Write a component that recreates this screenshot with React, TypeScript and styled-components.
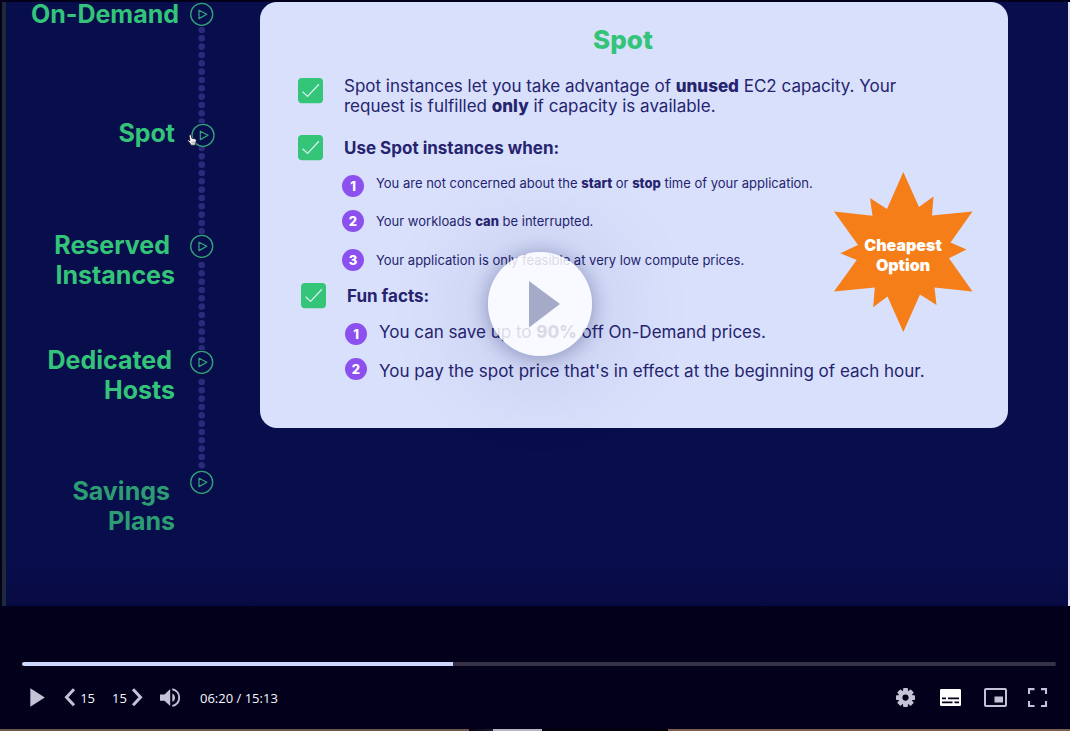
import React from 'react';
import styled, { createGlobalStyle } from 'styled-components';

const GlobalStyle = createGlobalStyle`
  * { box-sizing: border-box; }
  body { margin: 0; background: #02001b; }
  button { border: 0; padding: 0; background: none; color: inherit; font: inherit; cursor: pointer; }
  b { font-weight: 800; }
  svg { display: block; }
`;

const Player = styled.div`
  display: flex;
  flex-direction: column;
  min-height: 100vh;
  padding-top: 2px;
  background: #02001b;
  font-family: Inter, 'Liberation Sans', sans-serif;
`;

const Stage = styled.main`
  position: relative;
  flex: 1;
  display: flex;
  align-items: flex-start;
  margin-left: 2px;
  padding-right: 60px;
  overflow: hidden;
  border-left: 4px solid #1d2a39;
  border-right: 2px solid #e4e4f0;
  background: linear-gradient(to bottom, #080d4c 0, #080d4c 92%, #070a42 100%);
`;

const Nav = styled.nav`
  flex: none;
  width: 208px;
`;

const NavItem = styled.div<{ $height: number }>`
  display: flex;
  justify-content: flex-end;
  gap: 11px;
  height: ${(p) => p.$height}px;
`;

const NavLink = styled.a<{ $drop: number; $faded?: boolean }>`
  margin-top: ${(p) => p.$drop}px;
  color: ${(p) => (p.$faded ? '#2c9d72' : '#33c479')};
  font-size: 25px;
  font-weight: 700;
  line-height: 30px;
  text-align: right;
  text-decoration: none;
`;

const NavLine = styled.span<{ $inset: number }>`
  display: block;
  padding-right: ${(p) => p.$inset}px;
`;

const Track = styled.div`
  display: flex;
  flex-direction: column;
  width: 24px;
`;

const NodeIcon = styled.svg`
  flex: none;
  width: 24px;
  height: 24px;
  overflow: visible;
`;

const Connector = styled.svg`
  flex: 1;
  width: 24px;
  min-height: 0;
`;

const HandCursor = styled.svg`
  position: absolute;
  left: 181px;
  top: 132px;
  width: 10px;
  height: 12px;
`;

const Card = styled.article`
  position: relative;
  flex: 1;
  margin-left: 46px;
  padding: 22px 60px 48px 38px;
  border-radius: 17px;
  background: #d8e0fc;
  color: #26246f;
`;

const Title = styled.h1`
  margin: 0 0 20px;
  color: #33c479;
  font-size: 26px;
  font-weight: 800;
  line-height: 32px;
  text-align: center;
`;

const Section = styled.section<{ $gap: number; $indent?: number }>`
  margin-top: ${(p) => p.$gap}px;
  padding-left: ${(p) => p.$indent ?? 0}px;
`;

const Row = styled.div<{ $top?: boolean }>`
  display: flex;
  align-items: ${(p) => (p.$top ? 'flex-start' : 'center')};
  gap: 20px;
`;

const CheckIcon = styled.svg<{ $low?: boolean }>`
  flex: none;
  width: 26px;
  height: 26px;
  margin-top: ${(p) => (p.$low ? 2 : 0)}px;
`;

const Paragraph = styled.p`
  margin: 0;
  max-width: 580px;
  font-size: 17px;
  line-height: 20px;
`;

const Heading = styled.h2`
  margin: 0;
  font-size: 17px;
  font-weight: 700;
  line-height: 20px;
`;

const Steps = styled.ol`
  margin: 0;
  padding: 0 0 0 44px;
  list-style: none;
`;

const Step = styled.li<{ $gap: number; $align: string; $large?: boolean }>`
  display: flex;
  align-items: ${(p) => p.$align};
  gap: 12px;
  margin-top: ${(p) => p.$gap}px;
  font-size: ${(p) => (p.$large ? 17 : 13)}px;
  line-height: ${(p) => (p.$large ? 18 : 16)}px;
  white-space: nowrap;
`;

const StepNumber = styled.span`
  flex: none;
  width: 22px;
  height: 22px;
  border-radius: 50%;
  background: #8c50ee;
  color: #fff;
  font-size: 13px;
  font-weight: 800;
  line-height: 22px;
  text-align: center;
`;

const Burst = styled.div`
  position: absolute;
  top: 169px;
  right: 35px;
  display: grid;
  place-items: center;
  width: 140px;
  height: 162px;
`;

const BurstShape = styled.svg`
  grid-area: 1 / 1;
  width: 140px;
  height: 162px;
`;

const BurstText = styled.strong`
  grid-area: 1 / 1;
  z-index: 1;
  padding-top: 6px;
  color: #fff;
  font-size: 16px;
  font-weight: 900;
  line-height: 20px;
  text-align: center;
`;

const BigPlay = styled.button`
  position: absolute;
  top: calc(50% - 52px);
  left: calc(50% - 49px);
  width: 104px;
  height: 104px;
  border-radius: 50%;
  background: rgba(255, 255, 255, 0.83);
  box-shadow: 0 2px 20px rgba(12, 14, 80, 0.34), 0 4px 110px 4px rgba(12, 14, 80, 0.16);
`;

const Controls = styled.div`
  height: 123px;
  padding: 55px 14px 0 22px;
`;

const Seek = styled.input`
  display: block;
  width: 100%;
  height: 6px;
  margin: 0;
  appearance: none;
  background: none;
  &::-webkit-slider-runnable-track {
    height: 4px;
    border-radius: 2px;
    background: linear-gradient(to right, #cbd7fb 0, #cbd7fb 41.7%, #353247 41.7%);
  }
  &::-webkit-slider-thumb {
    appearance: none;
    width: 1px;
    height: 4px;
    background: none;
  }
`;

const Bar = styled.div`
  display: flex;
  align-items: center;
  height: 24px;
  margin-top: 19px;
  padding: 0 8px;
  color: #c4c3d6;
  font-family: 'Open Sans', 'Noto Sans', sans-serif;
  font-size: 13px;
  font-weight: 500;
`;

const Group = styled.div<{ $gap: number }>`
  display: flex;
  align-items: center;
  gap: ${(p) => p.$gap}px;
`;

const Control = styled.button<{ $width: number; $on?: boolean }>`
  display: flex;
  align-items: center;
  justify-content: space-between;
  width: ${(p) => p.$width}px;
  height: 24px;
  color: ${(p) => (p.$on ? '#ffffff' : '#c4c3d6')};
`;

const Digits = styled.span`
  color: #f8f8fc;
`;

const Time = styled.span`
  margin-left: 2px;
  color: #f8f8fc;
`;

const Spacer = styled.div`
  flex: 1;
`;

const Strip = styled.div`
  height: 2px;
  background: linear-gradient(
    to right,
    #6b5648 0, #6b5648 43.8%, #060410 43.8%, #1e1b33 46.1%, #b5b5bd 46.1%,
    #b5b5bd 50.7%, #030206 50.7%, #030206 62.4%, #7a5f50 62.4%
  );
`;

type Plan = {
  lines: { text: string; inset: number }[];
  height: number;
  drop: number;
  dots?: number;
  faded?: boolean;
  active?: boolean;
};

const plans: Plan[] = [
  { lines: [{ text: 'On-Demand', inset: 0 }], height: 121, drop: -3, dots: 4 },
  { lines: [{ text: 'Spot', inset: 4 }], height: 111, drop: -5, dots: 1, active: true },
  { lines: [{ text: 'Reserved', inset: 9 }, { text: 'Instances', inset: 4 }], height: 116, drop: -4, dots: 7 },
  { lines: [{ text: 'Dedicated', inset: 7 }, { text: 'Hosts', inset: 4 }], height: 120, drop: -5, dots: 8 },
  { lines: [{ text: 'Savings', inset: 9 }, { text: 'Plans', inset: 4 }], height: 68, drop: 6, faded: true },
];

const Check = ({ low }: { low?: boolean }) => (
  <CheckIcon $low={low} viewBox="0 0 26 26" aria-hidden="true">
    <rect x="0" y="0" width="25" height="25.3" rx="4" fill="#34c578" />
    <path d="M4.6 13.8 L9.6 18.4 L20.9 6.3" fill="none" stroke="#d3f0f0" strokeWidth="1.3" />
  </CheckIcon>
);

export default function App() {
  return (
    <Player>
      <GlobalStyle />
      <Stage>
        <Nav aria-label="Pricing options">
          {plans.map((plan) => (
            <NavItem key={plan.lines[0].text} $height={plan.height}>
              <NavLink href="#" $drop={plan.drop} $faded={plan.faded}>
                {plan.lines.map((line) => (
                  <NavLine key={line.text} $inset={line.inset}>{line.text}</NavLine>
                ))}
              </NavLink>
              <Track>
                <NodeIcon viewBox="0 0 24 24" aria-hidden="true">
                  <g transform={plan.active ? 'translate(1.3 0)' : undefined} fill="none" stroke="#33a479" strokeLinejoin="round">
                    <circle cx="11.7" cy="12.3" r="11" strokeWidth="1.3" />
                    <path d="M9 8.2 L16.8 12.3 L9 16.6 Z" strokeWidth="1.2" />
                  </g>
                </NodeIcon>
                {plan.dots !== undefined && (
                  <Connector aria-hidden="true">
                    <line x1="11.7" x2="11.7" y1={plan.dots} y2="100%" stroke="#2b2a7c" strokeWidth="6.6" strokeLinecap="round" strokeDasharray="0 8.33" />
                  </Connector>
                )}
              </Track>
            </NavItem>
          ))}
        </Nav>

        <Card>
          <Title>Spot</Title>
          <Row $top>
            <Check low />
            <Paragraph>
              Spot instances let you take advantage of <b>unused</b> EC2 capacity. Your
              request is fulfilled <b>only</b> if capacity is available.
            </Paragraph>
          </Row>
          <Section $gap={19}>
            <Row>
              <Check />
              <Heading>Use Spot instances when:</Heading>
            </Row>
            <Steps>
              <Step $gap={14} $align="flex-start">
                <StepNumber>1</StepNumber>
                <span>You are not concerned about the <b>start</b> or <b>stop</b> time of your application.</span>
              </Step>
              <Step $gap={13} $align="center">
                <StepNumber>2</StepNumber>
                <span>Your workloads <b>can</b> be interrupted.</span>
              </Step>
              <Step $gap={17} $align="center">
                <StepNumber>3</StepNumber>
                <span>Your application is only feasible at very low compute prices.</span>
              </Step>
            </Steps>
          </Section>
          <Section $gap={12} $indent={3}>
            <Row>
              <Check />
              <Heading>Fun facts:</Heading>
            </Row>
            <Steps>
              <Step $gap={14} $align="flex-start" $large>
                <StepNumber>1</StepNumber>
                <span>You can save up to <b>90%</b> off On-Demand prices.</span>
              </Step>
              <Step $gap={13} $align="flex-end" $large>
                <StepNumber>2</StepNumber>
                <span>You pay the spot price that's in effect at the beginning of each hour.</span>
              </Step>
            </Steps>
          </Section>
          <Burst>
            <BurstShape viewBox="0 0 140 162" aria-hidden="true">
              <path
                fill="#f57e18"
                d="M70.3 1 L86 36 L100.5 25.5 L99 44.5 L139.5 40.5 L117.5 71.5 L133.5 78.5 L116 87.3 L139.5 120.5 L101.5 116.5 L103.5 134 L87 123.5 L70.3 161 L54.5 125.5 L40.2 136.3 L41.8 116.5 L1 120.5 L23.7 89 L7.3 82.3 L25 74 L1 40.5 L39.5 44.7 L37 27 L54 38 Z"
              />
            </BurstShape>
            <BurstText>Cheapest<br />Option</BurstText>
          </Burst>
        </Card>

        <HandCursor viewBox="0 0 11 13" aria-hidden="true">
          <path
            d="M3.2 0.8 C4 0.5 4.6 1 4.8 1.8 L5.4 4.6 L8.6 5.2 C9.8 5.5 10.2 6.2 10.2 7.2 L9.6 10 L9 12.2 L4.6 12.2 L3 9.8 L0.9 7.6 C0.4 6.9 1.2 6.1 2 6.6 L3.2 7.4 L2.4 2.2 C2.3 1.5 2.6 1 3.2 0.8 Z"
            fill="#f7f7f7" stroke="#151528" strokeWidth="0.9"
          />
          <path d="M5.6 8 V10.5 M7 8 V10.5 M8.4 8 V10.5" stroke="#55556a" strokeWidth="0.5" />
        </HandCursor>

        <BigPlay aria-label="Play video">
          <svg width="104" height="104" viewBox="0 0 104 104" aria-hidden="true">
            <path d="M41 29 L72 52 L41 75.5 Z" fill="#a5aac9" />
          </svg>
        </BigPlay>
      </Stage>

      <Controls>
        <Seek type="range" aria-label="Seek" min={0} max={913} defaultValue={380} />
        <Bar>
          <Group $gap={17}>
            <Control $width={17} aria-label="Play">
              <svg width="16" height="20" viewBox="0 0 16 20"><path d="M0.3 0.3 L14.8 9.5 L0.3 18.8 Z" fill="currentColor" /></svg>
            </Control>
            <Control $width={31} aria-label="Back 15 seconds">
              <svg width="12" height="20" viewBox="0 0 12 20"><path d="M10 1.3 L2.5 9.3 L10 17.3" fill="none" stroke="currentColor" strokeWidth="3" /></svg>
              <Digits>15</Digits>
            </Control>
            <Control $width={31} aria-label="Forward 15 seconds">
              <Digits>15</Digits>
              <svg width="12" height="20" viewBox="0 0 12 20"><path d="M2 1.3 L9.5 9.3 L2 17.3" fill="none" stroke="currentColor" strokeWidth="3" /></svg>
            </Control>
            <Control $width={21} aria-label="Mute">
              <svg width="21" height="20" viewBox="0 0 21 20">
                <path d="M0 6.5 H4.5 L10.2 1 V18 L4.5 12.7 H0 Z" fill="currentColor" />
                <path d="M12.3 5.4 C15.9 6.7 15.9 12.5 12.3 13.7 Z" fill="currentColor" />
                <path d="M12.3 1.2 C21.5 2.9 21.5 16.2 12.3 17.9" fill="none" stroke="currentColor" strokeWidth="1.9" />
              </svg>
            </Control>
            <Time>06:20 / 15:13</Time>
          </Group>
          <Spacer />
          <Group $gap={21}>
            <Control $width={24} aria-label="Settings">
              <svg width="24" height="20" viewBox="0 0 24 20">
                <g fill="currentColor">
                  {[0, 45, 90, 135].map((angle) => (
                    <rect key={angle} x="10.1" y="0.1" width="4.8" height="19" rx="0.8" transform={`rotate(${angle} 12.5 9.6)`} />
                  ))}
                </g>
                <circle cx="12.5" cy="9.6" r="5.2" fill="#02001b" stroke="currentColor" strokeWidth="4.2" />
              </svg>
            </Control>
            <Control $width={24} $on aria-label="Subtitles">
              <svg width="24" height="20" viewBox="0 0 24 20">
                <rect x="2" y="1" width="21" height="17" rx="1.2" fill="currentColor" />
                <path d="M4 10.4 H8 M10 10.4 H21 M4 14.4 H14.5 M16.5 14.4 H21" stroke="#02001b" strokeWidth="1.8" />
              </svg>
            </Control>
            <Control $width={24} aria-label="Picture in picture">
              <svg width="24" height="20" viewBox="0 0 24 20">
                <rect x="2" y="1" width="21" height="17" rx="1" fill="none" stroke="currentColor" strokeWidth="2" />
                <rect x="11.5" y="8.5" width="8.5" height="6" fill="currentColor" />
              </svg>
            </Control>
            <Control $width={20} aria-label="Full screen">
              <svg width="20" height="20" viewBox="0 0 20 20">
                <path d="M1 6 V1.1 H6.5 M13 1.1 H18 V6 M18 13 V18 H13 M6.5 18 H1 V13" fill="none" stroke="currentColor" strokeWidth="2.1" />
              </svg>
            </Control>
          </Group>
        </Bar>
      </Controls>
      <Strip />
    </Player>
  );
}
